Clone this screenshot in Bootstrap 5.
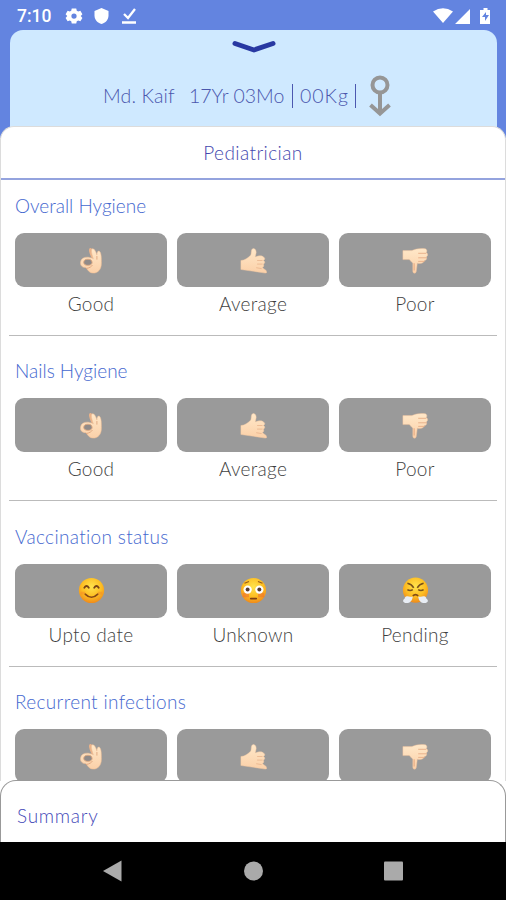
<!DOCTYPE html>
<html lang="en">
<head>
<meta charset="utf-8">
<meta name="viewport" content="width=device-width, initial-scale=1">
<title>Pediatrician</title>
<link href="https://cdn.jsdelivr.net/npm/bootstrap@5.3.0/dist/css/bootstrap.min.css" rel="stylesheet">
<style>
body{font-family:Lato,"Liberation Sans",sans-serif;font-weight:300;font-variant-ligatures:none;background:#fff;color:#3f3f3f}
.screen{width:506px;height:900px}
.top-area{background:#6384e0;height:138px;padding:0 9px 0 10px}
.status{height:30px;padding:1px 6px 0 7px;color:#fff}
.clock{font:500 17.5px/30px Roboto,sans-serif;width:48px}
.patient{background:#cfe9ff;height:108px;border-radius:13px 13px 0 0;color:#4a56ad}
.chevron{height:32px;padding-top:8px}
.info{font-size:19.5px;line-height:30px;height:51px;padding-left:93px}
.bar-line{width:1px;height:24px;background:#4c58b0}
.sheet{margin-top:-12px;height:655px;background:#fff;border-radius:14px 14px 0 0;border:1px solid #dcdcdc;border-width:1px 1px 0}
.sheet-title{height:53px;line-height:51px;font-size:19px;color:#4448ae;border-bottom:2px solid #94a3de;letter-spacing:.42px}
.question{height:165.4px;padding:13px 14px 0 14px}
.question h2{font-size:19px;font-weight:300;line-height:26px;height:40px;color:#4568cf}
.question h2.wide{letter-spacing:.34px}
.choices{gap:10px}
.choice{flex:1 1 0;height:54px;border:0;background:#9a9a9a;border-radius:9px}
.choice:hover{background:#929292}
.caption-text{font-size:19px;line-height:33px;height:33px;letter-spacing:.3px}
.rule{height:1px;background:#bbb;margin:15px -6px 0}
.summary{height:62px;margin-top:-1px;background:#fff;border:1px solid #999;border-width:1px 1px 0;border-radius:16px 16px 0 0;font-size:19px;color:#4549b8;padding:0 0 0 16px;line-height:70px;letter-spacing:.72px}
.android-nav{height:58px;background:#000;padding-left:102px}
.w-name{width:86px;letter-spacing:.15px}.w-age{width:103px}.w-kg{width:62px;padding-left:7px;letter-spacing:1px}
</style>
<script src="https://cdn.jsdelivr.net/npm/bootstrap@5.3.0/dist/js/bootstrap.bundle.min.js"></script>
</head>
<body>
<svg width="0" height="0" class="d-block" aria-hidden="true">
<defs>
<linearGradient id="skin" x1="0" y1="0" x2="0" y2="1"><stop offset="0" stop-color="#ffe8c9"/><stop offset="1" stop-color="#fbd0a8"/></linearGradient>
<radialGradient id="face" cx=".5" cy=".35" r=".65"><stop offset="0" stop-color="#ffe34d"/><stop offset=".6" stop-color="#fdbe22"/><stop offset="1" stop-color="#ef8b1b"/></radialGradient>
<symbol id="ok" viewBox="0 0 30 30">
<path d="M16 14C13 8 11 3 13 1.500c2-1.500 4 2 6 9z" fill="#eab38a"/>
<path d="M17 13C15 7 14 3 16 2c2-.5 4 3 5 7 0-3 1-5 2.500-4.500C26 6 26 12 26 18c0 7-4 11-9 11-4 0-6-3-8-6-5 0-7-3-6-7 1-5 8-6 14-3z" fill="url(#skin)" stroke="#eebd95" stroke-width=".6"/>
<ellipse cx="11" cy="17" rx="4.600" ry="3.400" fill="#918b89" stroke="#dca77f"/>
<path d="M16 20c-1 2-3 3-7 4M21 10v4" fill="none" stroke="#dfa67f"/>
</symbol>
<symbol id="call" viewBox="0 0 30 30">
<path d="M1 15C5 15 9 12 12 9c1-3 0-6 2-7s4 1 4 4l-1 5c3-1 7-2 9 0 2 1 2 3 0 4 2 1 2 3 0 4 1 2 0 3-1 4l4 3c1 2 1 3-1 3L15 27 1 25z" fill="url(#skin)" stroke="#f1c7a1" stroke-width=".5"/>
<path d="M19 15h6M19 19h6M18 23l6 1" fill="none" stroke="#e6b089" stroke-width=".8"/>
</symbol>
<symbol id="down" viewBox="0 0 30 30">
<path d="M1 4 11 4c4-2 10-3 15-2 2 1 2 3 1 4 2 1 2 4 0 5 1 2 0 4-2 4-1 3-4 4-8 3l-1 8c0 4-4 4-4 1V18C11 17 9 15 8 14H1z" fill="url(#skin)" stroke="#efc19b" stroke-width=".5"/>
<path d="M18 7h9M18 12h9M18 16h7" fill="none" stroke="#e7ae86"/><path d="M13.500 18v8" stroke="#e9ae86" stroke-width="1.300"/>
</symbol>
<symbol id="smile" viewBox="0 0 30 30"><circle cx="15" cy="15" r="14" fill="url(#face)"/>
<path d="M7 12q2.5-4 5 0M18 12q2.5-4 5 0" fill="none" stroke="#774216" stroke-width="2" stroke-linecap="round"/><path d="M8 19q7 7 14 0" fill="none" stroke="#874916" stroke-width="1.8" stroke-linecap="round"/><path d="M3 18h5M22 18h5" stroke="#f48828" stroke-width="3" opacity=".45"/></symbol>
<symbol id="flush" viewBox="0 0 30 30"><circle cx="15" cy="15" r="14" fill="url(#face)"/><path d="M3 20h7M20 20h7" stroke="#ef6830" stroke-width="5" opacity=".5"/>
<circle cx="8.5" cy="14" r="4.6" fill="#fff"/><circle cx="21.5" cy="14" r="4.6" fill="#fff"/><circle cx="8.5" cy="14" r="2.2" fill="#543b31"/><circle cx="21.5" cy="14" r="2.2" fill="#543b31"/><path d="M5 7l5-2M20 5l5 2" stroke="#9b5b15" stroke-width="1.3"/><path d="M12 24h6" stroke="#804012" stroke-width="2" stroke-linecap="round"/></symbol>
<symbol id="huff" viewBox="0 0 30 30"><circle cx="15" cy="14.500" r="14" fill="url(#face)"/>
<path d="M6 7q5 1 7 5M24 7q-5 1-7 5M6 14q3 2 6 0M18 14q3 2 6 0" fill="none" stroke="#78501a" stroke-width="1.7"/><path d="M12 21q3-3 6 0" fill="none" stroke="#814a16" stroke-width="2"/><path d="M12 22c-1 5-3 7-7 7-4 0-5-3-2-5 0-3 4-3 6-2zM18 22c1 5 3 7 7 7 4 0 5-3 2-5 0-3-4-3-6-2z" fill="#e8edf4"/></symbol>
</defs>
</svg>
<div class="screen d-flex flex-column overflow-hidden">
<header class="top-area flex-shrink-0">
<div class="status d-flex align-items-center">
<span class="clock">7:10</span>
<svg width="18" height="18" viewBox="0 0 24 24"><path fill="#fff" fill-rule="evenodd" d="m9 2-.7 3-2 1.100L3.500 5 .8 9.500 3 12 .8 14.500 3.500 19l2.800-1.100L8.300 19l.7 3h6l.7-3 2-1.100 2.800 1.100 2.700-4.500L21 12l2.200-2.500L20.500 5l-2.800 1.100-2-1.100L15 2zM12 8.500a3.500 3.500 0 1 1 0 7 3.500 3.500 0 1 1 0-7z"/></svg>
<svg class="ms-2" width="18" height="18" viewBox="0 0 18 18"><path transform="translate(3 0)" fill="#fff" d="m7.500 1 7 3v4.500c0 4-3 7.500-7 8.500-4-1-7-4.500-7-8.500V4z"/></svg>
<svg class="ms-2" width="20" height="18" viewBox="-4 0 20 18"><path d="m3 7 4 4 7-9" fill="none" stroke="#fff" stroke-width="2.300"/><path d="M1 15.500h14" stroke="#fff" stroke-width="2.500"/></svg>
<svg class="ms-auto" width="58" height="18" viewBox="0 0 58 18" fill="#fff"><path d="M0 4.500Q10-2 20 4.500L10 16zM37 2v15H22zM48 3h2.500V1h4v2H57v14H47V3z"/><path d="m53 5-4 5h3v4l4-6h-3z" fill="#6384e0"/></svg>
</div>
<div class="patient">
<div class="chevron"><svg class="d-block mx-auto" width="46" height="18" viewBox="0 0 46 18"><path d="m4 5.500 19 6.500 19-6.500" fill="none" stroke="#2838a2" stroke-width="5" stroke-linecap="round" stroke-linejoin="round"/></svg></div>
<div class="info d-flex align-items-center mt-2">
<span class="w-name text-nowrap">Md. Kaif</span><span class="w-age text-nowrap">17Yr 03Mo</span><span class="bar-line"></span><span class="w-kg text-nowrap">00Kg</span><span class="bar-line"></span>
<svg class="ms-2 flex-shrink-0" width="34" height="44" viewBox="-1 0 34 44" fill="none" stroke="#969696" stroke-width="4"><circle cx="15" cy="11" r="7.500"/><path d="M15 19v20M5.500 31l9.500 8.500L24.500 31"/></svg>
</div>
</div>
</header>
<main class="sheet overflow-hidden flex-shrink-0" id="sheet">
<div class="sheet-title text-center">Pediatrician</div>
</main>
<footer class="summary flex-shrink-0">Summary</footer>
<nav class="android-nav flex-shrink-0 d-flex align-items-center">
<svg width="302" height="24" viewBox="0 0 302 24" fill="#aaa"><path d="M1 12 19.500 1.500v21z"/><circle cx="151.500" cy="12" r="9.500"/><rect x="282" y="2.500" width="19" height="19" rx="1"/></svg>
</nav>
</div>
<script>
const hands = [['ok','Good'],['call','Average'],['down','Poor']];
const questions = [
  ['Overall Hygiene', hands],
  ['Nails Hygiene', hands],
  ['Vaccination status', [['smile','Upto date'],['flush','Unknown'],['huff','Pending']], 'wide'],
  ['Recurrent infections', hands, 'wide']
];
document.getElementById('sheet').insertAdjacentHTML('beforeend', questions.map(([title, options, tracking = ''], i) => {
  const last = i === questions.length - 1;
  return `
<section class="question"><h2 class="m-0 ${tracking}">${title}</h2>
<div class="choices d-flex">${options.map(([icon, label]) => `<div class="flex-fill w-100"><button class="choice w-100 d-flex align-items-center justify-content-center" aria-label="${label}"><svg width="27" height="27"><use href="#${icon}"/></svg></button>${last ? '' : `<div class="caption-text text-center">${label}</div>`}</div>`).join('')}</div>
${last ? '' : '<div class="rule"></div>'}</section>`;
}).join(''));
</script>
</body>
</html>
